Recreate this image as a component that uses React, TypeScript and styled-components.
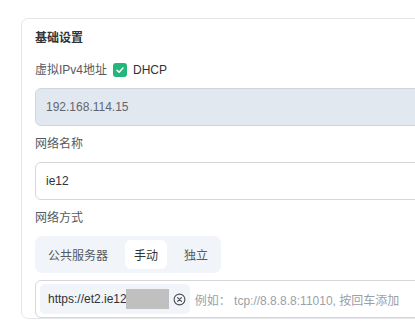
import React from "react";
import styled, { createGlobalStyle } from "styled-components";

const Global = createGlobalStyle`
  html, body { margin: 0; padding: 0; background: #ffffff; overflow: hidden; }
  body { font-family: "Liberation Sans", "Noto Sans CJK SC", sans-serif; }
`;

const Page = styled.div`
  padding: 18px 0 0 21px;
  width: 700px;
`;

const Card = styled.section`
  width: 640px;
  border: 1px solid #e4e6ea;
  border-radius: 7px;
  padding: 9px 13px 0 13px;
  display: flex;
  flex-direction: column;
  gap: 8px;
  background: #fff;
`;

const Title = styled.h3`
  margin: 0 0 4px 0;
  font-size: 12px;
  line-height: 20px;
  font-weight: 700;
  color: #2f3337;
`;

const Field = styled.div`
  display: flex;
  flex-direction: column;
  gap: 8px;
`;

const Label = styled.div`
  display: flex;
  align-items: center;
  gap: 6px;
  font-size: 12px;
  line-height: 20px;
  color: #555a60;
`;

const Check = styled.span`
  width: 14px;
  height: 14px;
  border-radius: 3px;
  background: #24b57a;
  display: inline-flex;
  align-items: center;
  justify-content: center;
`;

const CheckText = styled.span`
  color: #2f3337;
  font-size: 12px;
`;

const Input = styled.div<{ $disabled?: boolean }>`
  height: 38px;
  box-sizing: border-box;
  border: 1px solid ${(p) => (p.$disabled ? "#cfd6df" : "#d4d6da")};
  background: ${(p) => (p.$disabled ? "#e2e8f0" : "#ffffff")};
  border-radius: 6px;
  padding: 0 10px;
  display: flex;
  align-items: center;
  font-size: 12px;
  color: ${(p) => (p.$disabled ? "#5f6670" : "#2f3337")};
`;

const Tabs = styled.div`
  align-self: flex-start;
  display: flex;
  align-items: center;
  gap: 8px;
  background: #f1f4f8;
  border-radius: 7px;
  padding: 4px;
`;

const Tab = styled.div<{ $active?: boolean }>`
  height: 29px;
  padding: 0 9px;
  display: flex;
  align-items: center;
  font-size: 12px;
  border-radius: 6px;
  background: ${(p) => (p.$active ? "#ffffff" : "transparent")};
  color: ${(p) => (p.$active ? "#2f3337" : "#555a60")};
`;

const TagInput = styled.div`
  height: 38px;
  margin-top: -1px;
  box-sizing: border-box;
  border: 1px solid #d4d6da;
  border-radius: 6px;
  padding: 0 4px;
  display: flex;
  align-items: center;
  gap: 5px;
  font-size: 12px;
`;

const Chip = styled.div`
  height: 30px;
  display: flex;
  align-items: center;
  background: #f1f4f8;
  border-radius: 5px;
  padding: 0 4px 0 8px;
  color: #2f3337;
  gap: 4px;
`;

const Redact = styled.span`
  display: inline-block;
  width: 43px;
  height: 20px;
  background: #c0c0c0;
  margin-left: -5px;
`;

const Placeholder = styled.span`
  color: #9aa0a8;
`;

const CloseIcon = () => (
  <svg width="13" height="13" viewBox="0 0 14 14" fill="none">
    <circle cx="7" cy="7" r="5.8" stroke="#4a4f55" strokeWidth="1.2" />
    <path d="M4.9 4.9 L9.1 9.1 M9.1 4.9 L4.9 9.1" stroke="#4a4f55" strokeWidth="1.2" strokeLinecap="round" />
  </svg>
);

export default function App() {
  return (
    <>
      <Global />
      <Page>
        <Card>
          <Title>基础设置</Title>
          <Field>
            <Label>
              虚拟IPv4地址
              <Check>
                <svg width="10" height="10" viewBox="0 0 10 10" fill="none">
                  <path d="M2 5.2 L4.1 7.2 L8 3" stroke="#fff" strokeWidth="1.5" strokeLinecap="round" strokeLinejoin="round" />
                </svg>
              </Check>
              <CheckText>DHCP</CheckText>
            </Label>
            <Input $disabled>192.168.114.15</Input>
          </Field>
          <Field>
            <Label>网络名称</Label>
            <Input>ie12</Input>
          </Field>
          <Field>
            <Label>网络方式</Label>
            <Tabs>
              <Tab>公共服务器</Tab>
              <Tab $active>手动</Tab>
              <Tab>独立</Tab>
            </Tabs>
          </Field>
          <TagInput>
            <Chip>
              https://et2.ie12<Redact />
              <CloseIcon />
            </Chip>
            <Placeholder>例如： tcp://8.8.8.8:11010, 按回车添加</Placeholder>
          </TagInput>
        </Card>
      </Page>
    </>
  );
}
